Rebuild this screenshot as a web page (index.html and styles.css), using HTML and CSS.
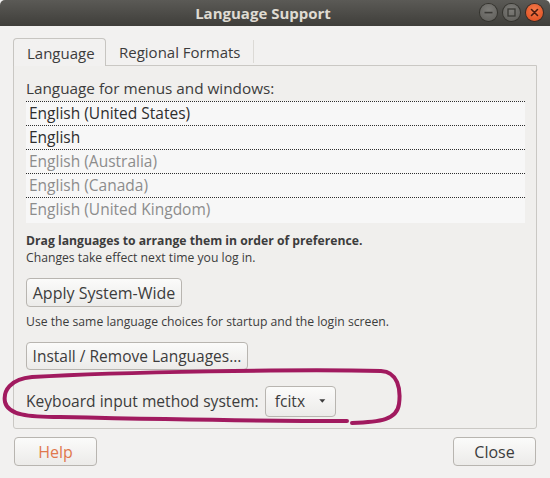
FILE: index.html
```html
<!DOCTYPE html>
<html>
<head>
<meta charset="utf-8">
<link rel="stylesheet" href="styles.css">
</head>
<body>
<div class="window">
  <div class="titlebar">
    <span class="title">Language Support</span>
    <div class="controls">
      <span class="ctl ctl-min"><svg width="17" height="17" viewBox="0 0 17 17"><rect x="4.5" y="7.8" width="8" height="1.6" fill="#3a3935"/></svg></span>
      <span class="ctl ctl-max"><svg width="17" height="17" viewBox="0 0 17 17"><rect x="5" y="5" width="7" height="7" fill="none" stroke="#3a3935" stroke-width="1.3"/></svg></span>
      <span class="ctl ctl-close"><svg width="17" height="17" viewBox="0 0 17 17"><path d="M5.5 5.5 L11.5 11.5 M11.5 5.5 L5.5 11.5" stroke="#4a1c10" stroke-width="1.6" stroke-linecap="round"/></svg></span>
    </div>
  </div>
  <div class="content">
    <div class="tabs">
      <div class="tab active">Language</div>
      <div class="tab">Regional Formats</div>
    </div>
    <div class="page">
      <div class="label">Language for menus and windows:</div>
      <div class="list">
        <div class="row">English (United States)</div>
        <div class="row">English</div>
        <div class="row dim">English (Australia)</div>
        <div class="row dim">English (Canada)</div>
        <div class="row dim">English (United Kingdom)</div>
      </div>
      <div class="note">
        <div class="bold">Drag languages to arrange them in order of preference.</div>
        <div>Changes take effect next time you log in.</div>
      </div>
      <button class="btn btn-apply">Apply System-Wide</button>
      <div class="note note2">Use the same language choices for startup and the login screen.</div>
      <button class="btn btn-install">Install / Remove Languages...</button>
      <div class="kbd">
        <span>Keyboard input method system:</span>
        <span class="combo">fcitx<svg class="arrow" width="10" height="6" viewBox="0 0 10 6"><path d="M0.5 0.5 L9.5 0.5 L5 5.5 Z" fill="#3c3c3c"/></svg></span>
      </div>
    </div>
    <div class="actions">
      <button class="btn btn-help">Help</button>
      <button class="btn btn-close">Close</button>
    </div>
  </div>
  <svg class="annot" width="550" height="478" viewBox="0 0 550 478">
    <path d="M352 423 C380 422 397 420 399 404 C401 389 398 372 381 371 C300 369 120 372 32 377 C10 379 3 391 5 402 C8 415 28 417 60 417 C150 419 250 421 347 421" fill="none" stroke="#a11a5f" stroke-width="4" stroke-linecap="round"/>
  </svg>
</div>
</body>
</html>
```

FILE: styles.css
```css
* { box-sizing: border-box; }
html, body {
  margin: 0;
  padding: 0;
  width: 550px;
  height: 478px;
  overflow: hidden;
  background: #f2f1f0;
  font-family: "Open Sans", "Noto Sans", sans-serif;
  color: #3c3c3c;
}
.window {
  position: relative;
  width: 550px;
  height: 478px;
  background: #f2f1f0;
}
.titlebar {
  height: 26px;
  background: linear-gradient(#5b5a56, #3f3e3a);
  border-radius: 5px 5px 0 0;
  display: flex;
  align-items: center;
  justify-content: center;
  position: relative;
}
.title {
  color: #dfdbd2;
  font-weight: bold;
  font-size: 15px;
  margin-left: -24px;
}
.controls {
  position: absolute;
  right: 7px;
  top: 4px;
  display: flex;
  gap: 6px;
}
.ctl {
  width: 17px;
  height: 17px;
  border-radius: 50%;
  display: block;
  background: radial-gradient(circle at 50% 35%, #7d7c78, #5c5b57);
  box-shadow: 0 0 0 1px #35342f;
}
.ctl svg { display: block; }
.ctl-close {
  background: radial-gradient(circle at 50% 35%, #f47a4a, #de4a1c);
  box-shadow: 0 0 0 1px #3f2a22;
}
.content {
  padding: 11px 13px 0 13px;
}
.tabs {
  display: flex;
  height: 28px;
  align-items: flex-end;
}
.tab {
  font-size: 15px;
  height: 23px;
  padding: 0 13px;
  display: flex;
  align-items: center;
  color: #3c3c3c;
  border-right: 1px solid #dcdad6;
  margin-bottom: 2px;
}
.tab.active {
  height: 28px;
  border: 1px solid #c7c5c1;
  border-bottom: none;
  border-radius: 4px 4px 0 0;
  background: #f2f1f0;
  width: 93px;
  position: relative;
  margin-bottom: -1px;
}
.page {
  border: 1px solid #cac8c4;
  border-radius: 0 0 3px 3px;
  height: 364px;
  padding: 10px 11px 0 12px;
  background: #f0efed;
}
.label {
  font-size: 15.3px;
  height: 22px;
  line-height: 22px;
  margin-top: 1px;
}
.list {
  margin-top: 2px;
  background: #f7f7f7;
  width: 499px;
  padding-bottom: 2px;
}
.row {
  height: 24px;
  line-height: 23px;
  font-size: 15.5px;
  padding-left: 3px;
  border-top: 1px dotted #2e2e2e;
  color: #2e2e2e;
}
.row.dim { color: #8c8c8c; }
.note {
  font-size: 12.2px;
  line-height: 16.5px;
  margin-top: 10px;
}
.bold { font-weight: bold; }
.note2 { margin-top: 7px; }
.btn {
  display: block;
  font-family: inherit;
  font-size: 16px;
  color: #3c3c3c;
  background: linear-gradient(#fbfbfa, #ecebe9);
  border: 1px solid #b8b5b0;
  border-radius: 4px;
  padding: 0;
  height: 29px;
  white-space: nowrap;
}
.btn-apply { margin-top: 12px; width: 156px; }
.btn-install { margin-top: 11px; width: 222px; height: 28px; font-size: 15.5px; }
.kbd {
  margin-top: 16px;
  display: flex;
  align-items: center;
  gap: 6px;
  font-size: 15.6px;
}
.combo {
  display: flex;
  align-items: center;
  gap: 14px;
  height: 31px;
  width: 71px;
  padding: 0 9px;
  background: linear-gradient(#fbfbfa, #ecebe9);
  border: 1px solid #b8b5b0;
  border-radius: 4px;
}
.actions {
  display: flex;
  justify-content: space-between;
  margin-top: 8px;
  padding: 0 1px 0 1px;
}
.btn-help { width: 83px; height: 29px; color: #e0784d; }
.btn-close { width: 83px; height: 29px; }
.annot {
  position: absolute;
  left: 0;
  top: 0;
  pointer-events: none;
}
```
